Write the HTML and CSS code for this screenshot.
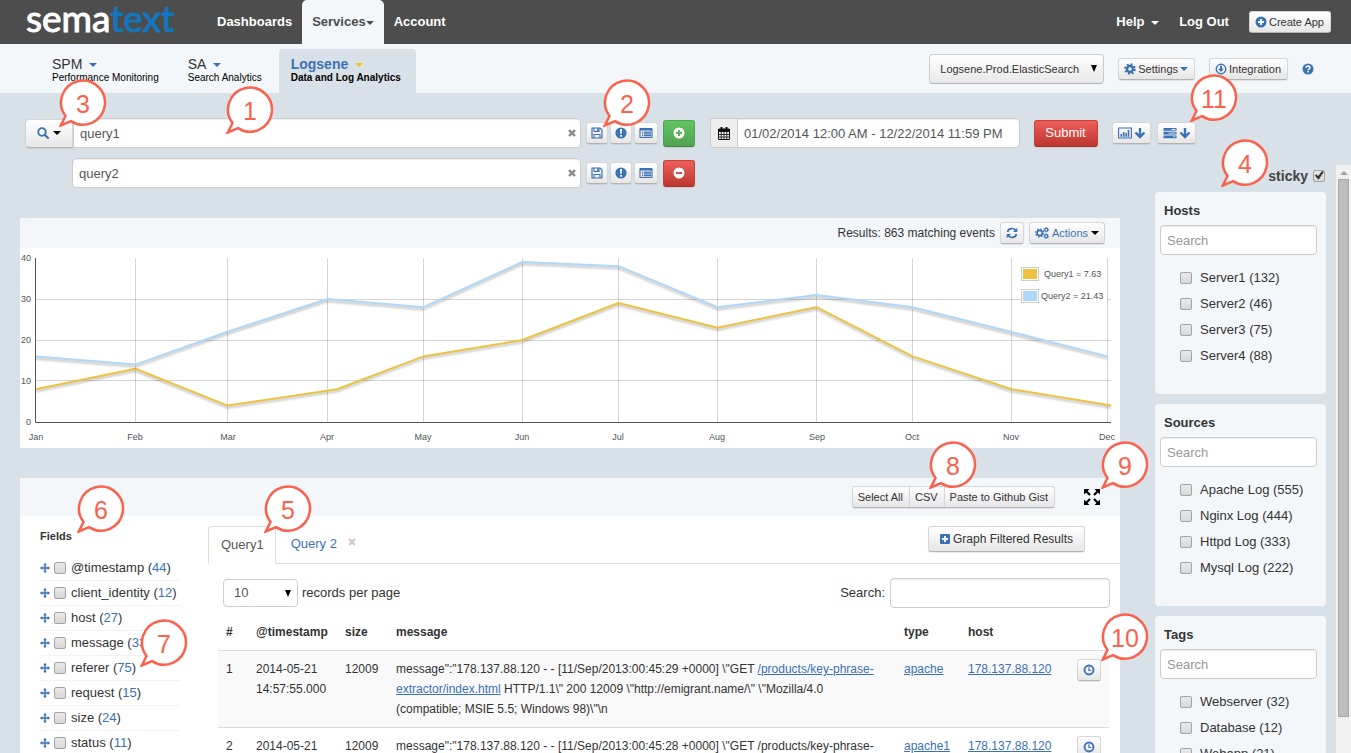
FILE: index.html
```html
<!DOCTYPE html>
<html lang="en">
<head>
<meta charset="utf-8">
<title>Logsene</title>
<link rel="stylesheet" href="styles.css">
</head>
<body>
<svg class="sprite" aria-hidden="true">
  <symbol id="i-save" viewBox="0 0 12 12"><path d="M1 1h8l2 2v8H1z" fill="none" stroke="currentColor" stroke-width="1.2"/><path d="M3 1v3.5h5V1M3 11V7.500h6V11" fill="none" stroke="currentColor" stroke-width="1.1"/><path d="M6 1.500h1.500V4H6z" fill="currentColor"/></symbol>
  <symbol id="i-alert" viewBox="0 0 12 12"><circle cx="6" cy="6" r="5.600" fill="currentColor"/><path d="M5 2h2l-.4 5H5.400zM5.100 8h1.800v1.800H5.100z" fill="#fff"/></symbol>
  <symbol id="i-list" viewBox="0 0 14 12"><rect x="1" y="1.500" width="12" height="9" rx=".5" fill="none" stroke="currentColor" stroke-width="1.200"/><path d="M1 1h12v2.500H1zM3 4.500h1.200v1.200H3zM5 4.500h7v1.200H5zM3 6.300h1.200v1.200H3zM5 6.300h7v1.200H5zM3 8.100h1.200v1.200H3zM5 8.100h7v1.200H5z" fill="currentColor"/></symbol>
  <symbol id="i-plus" viewBox="0 0 12 12"><path fill-rule="evenodd" d="M6 .5a5.500 5.500 0 1 1 0 11a5.500 5.500 0 0 1 0-11zM5 3v2H3v2h2v2h2V7h2V5H7V3z" fill="currentColor"/></symbol>
  <symbol id="i-minus" viewBox="0 0 12 12"><path fill-rule="evenodd" d="M6 .5a5.500 5.500 0 1 1 0 11a5.500 5.500 0 0 1 0-11zM3 5v2h6V5z" fill="currentColor"/></symbol>
  <symbol id="i-plus-square" viewBox="0 0 12 12"><path fill-rule="evenodd" d="M2 1h8a1 1 0 0 1 1 1v8a1 1 0 0 1-1 1H2a1 1 0 0 1-1-1V2a1 1 0 0 1 1-1zM5 3v2H3v2h2v2h2V7h2V5H7V3z" fill="currentColor"/></symbol>
  <symbol id="i-calendar" viewBox="0 0 12 13"><path d="M.5 2h11v10.500H.5z" fill="none" stroke="currentColor"/><path d="M.5 2h11v3H.5zM2.500 0h2v3h-2zM7.500 0h2v3h-2z" fill="currentColor"/><path d="M3.250 5v7.500M6 5v7.500M8.750 5v7.500M.5 7.500h11M.5 10h11" stroke="currentColor" stroke-width=".8"/></symbol>
  <symbol id="i-search" viewBox="0 0 12 12"><circle cx="5" cy="5" r="3.800" fill="none" stroke="currentColor" stroke-width="1.800"/><path d="M7.700 7.700l3.300 3.300" stroke="currentColor" stroke-width="2.200" stroke-linecap="round"/></symbol>
  <symbol id="i-chart" viewBox="0 0 14 12"><path d="M.6 1h12.800v10H.6z" fill="none" stroke="currentColor" stroke-width="1.100"/><path d="M2.500 7h1.600v2.800H2.500zM4.900 5h1.600v4.800H4.900zM7.300 6h1.600v3.800H7.300zM9.700 3h1.600v6.800H9.700z" fill="currentColor"/></symbol>
  <symbol id="i-down" viewBox="0 0 12 12"><path d="M6 1v9M1.500 5.500L6 10l4.500-4.500" fill="none" stroke="currentColor" stroke-width="2.400"/></symbol>
  <symbol id="i-tasks" viewBox="0 0 13 12"><path d="M0 1h13v2.800H0zM0 4.700h13v2.800H0zM0 8.400h13v2.800H0z" fill="currentColor"/><path d="M8 2h4v.9H8zM5 5.700h7v.9H5zM9.500 9.400H12v.9H9.500z" fill="#f2f2f2"/></symbol>
  <symbol id="i-cog" viewBox="0 0 12 12"><circle cx="6" cy="6" r="3" fill="none" stroke="currentColor" stroke-width="2.400"/><circle cx="6" cy="6" r="4.800" fill="none" stroke="currentColor" stroke-width="2" stroke-dasharray="1.900 1.870"/></symbol>
  <symbol id="i-cogs" viewBox="0 0 14 12"><circle cx="4.700" cy="6" r="2.600" fill="none" stroke="currentColor" stroke-width="1.600"/><circle cx="4.700" cy="6" r="3.900" fill="none" stroke="currentColor" stroke-width="1.500" stroke-dasharray="1.500 1.563"/><circle cx="11.200" cy="2.800" r="1.500" fill="none" stroke="currentColor" stroke-width="1.200"/><circle cx="11.200" cy="2.800" r="2.300" fill="none" stroke="currentColor" stroke-width=".9" stroke-dasharray="1 .806"/><circle cx="11.200" cy="9.200" r="1.500" fill="none" stroke="currentColor" stroke-width="1.200"/><circle cx="11.200" cy="9.200" r="2.300" fill="none" stroke="currentColor" stroke-width=".9" stroke-dasharray="1 .806"/></symbol>
  <symbol id="i-refresh" viewBox="0 0 12 12"><path d="M1.500 5A4.600 4.600 0 0 1 9.600 3.300M10.500 7A4.600 4.600 0 0 1 2.400 8.700" fill="none" stroke="currentColor" stroke-width="1.700"/><path d="M11.300.8v4.300H7zM.7 11.200V6.900H5z" fill="currentColor"/></symbol>
  <symbol id="i-clock" viewBox="0 0 12 12"><circle cx="6" cy="6" r="4.500" fill="none" stroke="currentColor" stroke-width="1.900"/><path d="M6 3.300V6.500H8.300" fill="none" stroke="currentColor" stroke-width="1.200"/></symbol>
  <symbol id="i-help" viewBox="0 0 12 12"><circle cx="6" cy="6" r="5.500" fill="currentColor"/><path d="M4 4.800C4 2.500 8 2.500 8 4.600C8 5.800 6.100 5.800 6.100 7.200" fill="none" stroke="#fff" stroke-width="1.500"/><path d="M5.300 8h1.600v1.500H5.300z" fill="#fff"/></symbol>
  <symbol id="i-download" viewBox="0 0 12 12"><circle cx="6" cy="6" r="4.700" fill="none" stroke="currentColor" stroke-width="1.500"/><path d="M5 2.800h2v3h1.900L6 9 3.100 5.800H5z" fill="currentColor"/></symbol>
  <symbol id="i-move" viewBox="0 0 12 12"><path d="M6 1v10M1 6h10" stroke="currentColor" stroke-width="1.700"/><path d="M6 0l2.300 2.800H3.700zM6 12l2.300-2.800H3.700zM0 6l2.800-2.300v4.600zM12 6L9.200 3.700v4.600z" fill="currentColor"/></symbol>
  <symbol id="i-expand" viewBox="0 0 16 16"><path d="M0 0h5.500L0 5.500zM16 0v5.500L10.500 0zM0 16v-5.500L5.500 16zM16 16h-5.500l5.500-5.500z" fill="currentColor"/><path d="M2 2l4 4M14 2l-4 4M2 14l4-4M14 14l-4-4" stroke="currentColor" stroke-width="2.200"/></symbol>
  <symbol id="i-tri" viewBox="0 0 6 7"><path d="M0 0h6L3 7z" fill="currentColor"/></symbol>
  <symbol id="i-x" viewBox="0 0 8 8"><path d="M1 1l6 6M7 1L1 7" stroke="currentColor" stroke-width="2.400"/></symbol>
  <symbol id="i-bubble" viewBox="0 0 48 48"><path d="M1.800 46.500L6.500 37A22 22 0 1 1 12 42.100z" fill="#fff" stroke="#fb614d" stroke-width="2.500"/></symbol>
</svg>

<header class="topbar">
  <a class="logo" href="#">sema<span>text</span></a>
  <nav class="mainnav">
    <a href="#">Dashboards</a>
    <a href="#" class="active">Services<i class="caret"></i></a>
    <a href="#">Account</a>
  </nav>
  <div class="usernav">
    <a href="#">Help <i class="caret"></i></a>
    <a href="#">Log Out</a>
    <button class="btn"><svg class="ico"><use href="#i-plus"/></svg>Create App</button>
  </div>
</header>

<div class="subnav">
  <nav class="apps">
    <a href="#"><span class="app">SPM <i class="caret"></i></span><span class="desc">Performance Monitoring</span></a>
    <a href="#"><span class="app">SA <i class="caret"></i></span><span class="desc">Search Analytics</span></a>
    <a href="#" class="active"><span class="app">Logsene <i class="caret"></i></span><span class="desc">Data and Log Analytics</span></a>
  </nav>
  <div class="apptools">
    <div class="picker app-picker">
      <select aria-label="Application"><option>Logsene.Prod.ElasticSearch</option></select>
      <svg><use href="#i-tri"/></svg>
    </div>
    <button class="btn"><svg class="ico"><use href="#i-cog"/></svg>Settings <i class="caret blue"></i></button>
    <button class="btn"><svg class="ico"><use href="#i-download"/></svg>Integration</button>
    <a href="#" class="help" aria-label="Help"><svg class="ico"><use href="#i-help"/></svg></a>
  </div>
</div>

<form class="query">
  <div class="queries">
    <div class="qrow">
      <button type="button" class="btn scope" aria-label="Search scope"><svg class="ico"><use href="#i-search"/></svg><i class="caret dark"></i></button>
      <div class="field joined"><input type="text" value="query1" aria-label="First query"><button type="button" class="clear" aria-label="Clear"><svg><use href="#i-x"/></svg></button></div>
      <div class="acts">
        <button type="button" class="btn" aria-label="Save"><svg class="ico"><use href="#i-save"/></svg></button>
        <button type="button" class="btn" aria-label="Alert"><svg class="ico"><use href="#i-alert"/></svg></button>
        <button type="button" class="btn" aria-label="List"><svg class="ico wide"><use href="#i-list"/></svg></button>
      </div>
      <button type="button" class="btn solid green" aria-label="Add query"><svg class="ico"><use href="#i-plus"/></svg></button>
    </div>
    <div class="qrow second">
      <div class="field"><input type="text" value="query2" aria-label="Second query"><button type="button" class="clear" aria-label="Clear"><svg><use href="#i-x"/></svg></button></div>
      <div class="acts">
        <button type="button" class="btn" aria-label="Save"><svg class="ico"><use href="#i-save"/></svg></button>
        <button type="button" class="btn" aria-label="Alert"><svg class="ico"><use href="#i-alert"/></svg></button>
        <button type="button" class="btn" aria-label="List"><svg class="ico wide"><use href="#i-list"/></svg></button>
      </div>
      <button type="button" class="btn solid red" aria-label="Remove query"><svg class="ico"><use href="#i-minus"/></svg></button>
    </div>
  </div>
  <div class="range">
    <label class="daterange"><span class="addon"><svg><use href="#i-calendar"/></svg></span><input type="text" value="01/02/2014 12:00 AM - 12/22/2014 11:59 PM" aria-label="Date range"></label>
    <button type="button" class="btn solid red submit">Submit</button>
    <button type="button" class="btn double" aria-label="Toggle chart"><svg class="ico wide"><use href="#i-chart"/></svg><svg class="ico"><use href="#i-down"/></svg></button>
    <button type="button" class="btn double" aria-label="Toggle filters"><svg class="ico wide"><use href="#i-tasks"/></svg><svg class="ico"><use href="#i-down"/></svg></button>
  </div>
</form>

<div class="workspace">
  <main class="content">
    <section class="panel">
      <div class="chart-head">
        <span>Results: 863 matching events</span>
        <button class="btn" aria-label="Refresh"><svg class="ico"><use href="#i-refresh"/></svg></button>
        <button class="btn link"><svg class="ico wide"><use href="#i-cogs"/></svg>Actions <i class="caret dark"></i></button>
      </div>
      <svg class="chart" viewBox="0 0 1100 200" role="img" aria-label="Matching events per month">
        <defs>
          <path id="s2" d="M16 108.400L115.500 116.600 207.500 83.800 307.500 51 403.500 59.200 502.500 14 598.500 18.200 697.500 59.200 796.500 47 892.500 59.200 991.500 84 1087.500 108.400"/>
          <path id="s1" d="M16 141.200L115.500 120.700 207.500 157.600 317 141.200 403.500 108.400 502.500 92 598.500 55 697.500 79.700 796.500 59.200 892.500 108.400 991.500 141.200 1091 157.600"/>
        </defs>
        <path class="grid" d="M16 51.500h1075M16 92.500h1075M16 132.500h1075M115.500 10v164M207.500 10v164M307.500 10v164M403.500 10v164M502.500 10v164M598.500 10v164M697.500 10v164M796.500 10v164M892.500 10v164M991.500 10v164M1087.500 10v164"/>
        <path class="axis" d="M15.500 10v164.500H1091"/>
        <use href="#s1" class="line yellow"/>
        <use href="#s2" class="line sky"/>
        <rect x="1018" y="43" width="69" height="10" fill="#fff"/>
        <g class="keys"><rect x="1001.500" y="19.500" width="17" height="13"/><rect x="1001.500" y="41.500" width="17" height="13"/></g>
        <rect x="1003" y="21" width="14" height="10" fill="#edc240"/><rect x="1003" y="43" width="14" height="10" fill="#afd8f8"/>
        <g class="labels">
          <text x="1024" y="29">Query1 = 7.63</text><text x="1021" y="51">Query2 = 21.43</text>
          <g text-anchor="end"><text x="11" y="13">40</text><text x="11" y="54">30</text><text x="11" y="95">20</text><text x="11" y="136">10</text><text x="11" y="177">0</text></g>
          <g text-anchor="middle"><text x="16" y="192">Jan</text><text x="115" y="192">Feb</text><text x="208" y="192">Mar</text><text x="307" y="192">Apr</text><text x="403" y="192">May</text><text x="502" y="192">Jun</text><text x="598" y="192">Jul</text><text x="697" y="192">Aug</text><text x="797" y="192">Sep</text><text x="892" y="192">Oct</text><text x="991" y="192">Nov</text><text x="1087" y="192">Dec</text></g>
        </g>
      </svg>
    </section>

    <section class="panel">
      <div class="results-head">
        <div class="group"><button class="btn">Select All</button><button class="btn">CSV</button><button class="btn">Paste to Github Gist</button></div>
        <button class="expand" aria-label="Expand"><svg><use href="#i-expand"/></svg></button>
      </div>
      <div class="results">
        <aside class="fields">
          <h2>Fields</h2>
          <ul>
            <li><svg><use href="#i-move"/></svg><label><input type="checkbox">@timestamp (<b>44</b>)</label></li>
            <li><svg><use href="#i-move"/></svg><label><input type="checkbox">client_identity (<b>12</b>)</label></li>
            <li><svg><use href="#i-move"/></svg><label><input type="checkbox">host (<b>27</b>)</label></li>
            <li><svg><use href="#i-move"/></svg><label><input type="checkbox">message (<b>33</b>)</label></li>
            <li><svg><use href="#i-move"/></svg><label><input type="checkbox">referer (<b>75</b>)</label></li>
            <li><svg><use href="#i-move"/></svg><label><input type="checkbox">request (<b>15</b>)</label></li>
            <li><svg><use href="#i-move"/></svg><label><input type="checkbox">size (<b>24</b>)</label></li>
            <li><svg><use href="#i-move"/></svg><label><input type="checkbox">status (<b>11</b>)</label></li>
          </ul>
        </aside>
        <div class="records">
          <div class="tabs">
            <a href="#" class="tab active">Query1</a>
            <a href="#" class="tab">Query 2<svg><use href="#i-x"/></svg></a>
            <button class="btn graph"><svg class="ico"><use href="#i-plus-square"/></svg>Graph Filtered Results</button>
          </div>
          <div class="tabletools">
            <div class="picker size-picker">
              <select id="pagesize"><option>10</option></select>
              <svg><use href="#i-tri"/></svg>
            </div>
            <label for="pagesize">records per page</label>
            <label class="find">Search: <input type="text"></label>
          </div>
          <table>
            <colgroup><col class="c-n"><col class="c-ts"><col class="c-size"><col><col class="c-type"><col class="c-host"><col class="c-act"></colgroup>
            <thead><tr><th>#</th><th>@timestamp</th><th>size</th><th>message</th><th>type</th><th>host</th><th></th></tr></thead>
            <tbody>
              <tr class="odd"><td>1</td><td>2014-05-21 14:57:55.000</td><td>12009</td><td>message":"178.137.88.120 - - [11/Sep/2013:00:45:29 +0000] \"GET <a href="#">/products/key-phrase-<br>extractor/index.html</a> HTTP/1.1\" 200 12009 \"http://emigrant.name/\" \"Mozilla/4.0<br>(compatible; MSIE 5.5; Windows 98)\"\n</td><td><a href="#">apache</a></td><td><a href="#">178.137.88.120</a></td><td><button class="btn" aria-label="Context"><svg class="ico"><use href="#i-clock"/></svg></button></td></tr>
              <tr><td>2</td><td>2014-05-21</td><td>12009</td><td>message":"178.137.88.120 - - [11/Sep/2013:00:45:28 +0000] \"GET /products/key-phrase-</td><td><a href="#">apache1</a></td><td><a href="#">178.137.88.120</a></td><td><button class="btn" aria-label="Context"><svg class="ico"><use href="#i-clock"/></svg></button></td></tr>
            </tbody>
          </table>
        </div>
      </div>
    </section>
  </main>

  <aside class="side">
    <div class="facets">
      <label class="sticky">sticky <input type="checkbox" checked></label>
      <section class="facet">
        <h2>Hosts</h2>
        <input type="text" placeholder="Search" aria-label="Search hosts">
        <label><input type="checkbox">Server1 (132)</label>
        <label><input type="checkbox">Server2 (46)</label>
        <label><input type="checkbox">Server3 (75)</label>
        <label><input type="checkbox">Server4 (88)</label>
      </section>
      <section class="facet">
        <h2>Sources</h2>
        <input type="text" placeholder="Search" aria-label="Search sources">
        <label><input type="checkbox">Apache Log (555)</label>
        <label><input type="checkbox">Nginx Log (444)</label>
        <label><input type="checkbox">Httpd Log (333)</label>
        <label><input type="checkbox">Mysql Log (222)</label>
      </section>
      <section class="facet">
        <h2>Tags</h2>
        <input type="text" placeholder="Search" aria-label="Search tags">
        <label><input type="checkbox">Webserver (32)</label>
        <label><input type="checkbox">Database (12)</label>
        <label><input type="checkbox">Webapp (21)</label>
      </section>
    </div>
    <div class="scroll"><svg viewBox="0 0 8 4"><path d="M0 4L4 0l4 4z" fill="#a3a3a3"/></svg><div class="thumb"></div></div>
  </aside>
</div>

<svg class="pin p1" viewBox="0 0 48 48"><use href="#i-bubble"/><text x="24" y="34">1</text></svg>
<svg class="pin p2" viewBox="0 0 48 48"><use href="#i-bubble"/><text x="24" y="34">2</text></svg>
<svg class="pin p3" viewBox="0 0 48 48"><use href="#i-bubble"/><text x="24" y="34">3</text></svg>
<svg class="pin p4" viewBox="0 0 48 48"><use href="#i-bubble"/><text x="24" y="34">4</text></svg>
<svg class="pin p5" viewBox="0 0 48 48"><use href="#i-bubble"/><text x="24" y="34">5</text></svg>
<svg class="pin p6" viewBox="0 0 48 48"><use href="#i-bubble"/><text x="24" y="34">6</text></svg>
<svg class="pin p7" viewBox="0 0 48 48"><use href="#i-bubble"/><text x="24" y="34">7</text></svg>
<svg class="pin p8" viewBox="0 0 48 48"><use href="#i-bubble"/><text x="24" y="34">8</text></svg>
<svg class="pin p9" viewBox="0 0 48 48"><use href="#i-bubble"/><text x="24" y="34">9</text></svg>
<svg class="pin p10" viewBox="0 0 48 48"><use href="#i-bubble"/><text x="24" y="34">10</text></svg>
<svg class="pin p11" viewBox="0 0 48 48"><use href="#i-bubble"/><text x="24" y="34">11</text></svg>
</body>
</html>
```
FILE: styles.css
```css
* { box-sizing: border-box; }
body {
  margin: 0;
  height: 100vh;
  overflow: hidden;
  display: flex;
  flex-direction: column;
  position: relative;
  background: #d8e0e8;
  color: #333;
  font: 13px/20px "Liberation Sans", Arial, sans-serif;
}
input, select, button { font: inherit; color: inherit; }
a { color: #3a72b4; }
h2 { margin: 0; font-size: 13px; line-height: 20px; }
.sprite { position: absolute; width: 0; height: 0; }

.caret { display: inline-block; border: 4px solid transparent; border-top-color: currentColor; border-bottom: 0; vertical-align: middle; }
.caret.blue { color: #3a72b4; }
.caret.dark { color: #000; }
.ico { width: 12px; height: 12px; color: #3a72b4; flex: none; }
.ico.wide { width: 14px; }

.btn {
  display: inline-flex;
  align-items: center;
  justify-content: center;
  gap: 2px;
  height: 22px;
  padding: 0 6px 0 5px;
  border: 1px solid #d4d6d8;
  border-bottom-color: #b3b3b3;
  border-radius: 3px;
  background: linear-gradient(#fff, #e6e6e6);
  box-shadow: 0 1px 1px rgba(0, 0, 0, .08);
  font-size: 11px;
  line-height: 16px;
  white-space: nowrap;
}
.btn.link { gap: 3px; color: #3a72b4; }

input[type="text"] {
  min-width: 0;
  height: 30px;
  padding: 0 6px;
  border: 1px solid #ccc;
  border-radius: 4px;
  background: #fff;
  box-shadow: inset 0 1px 1px rgba(0, 0, 0, .075);
  color: #555;
}
input::placeholder { color: #999; }
input[type="checkbox"] {
  appearance: none;
  flex: none;
  width: 12px;
  height: 12px;
  margin: 0;
  border: 1px solid #a3a3a3;
  border-radius: 2px;
  background: linear-gradient(#e9e9e9, #d8d8d8);
}
input[type="checkbox"]:checked::before {
  content: "";
  display: block;
  width: 10px;
  height: 10px;
  background: #333;
  clip-path: polygon(8% 50%, 26% 38%, 40% 58%, 80% 5%, 98% 15%, 45% 92%);
}

.topbar { display: flex; height: 44px; flex: none; padding: 0 20px 0 26px; background: #4d4d4d; }
.logo { width: 181px; color: #fff; font: 37px/36px Lato, sans-serif; text-decoration: none; -webkit-text-stroke: 1px currentColor; }
.logo span { color: #1277bd; }
.mainnav { display: flex; }
.mainnav a { padding: 0 10px; line-height: 44px; color: #fff; font-weight: bold; text-decoration: none; }
.mainnav a.active { border-radius: 5px 5px 0 0; background: #f3f7fa; color: #4d4d4d; }
.usernav { display: flex; align-items: center; gap: 20px; margin-left: auto; }
.usernav a { color: #fff; font-weight: bold; text-decoration: none; }
.usernav .caret { margin-left: 3px; }

.subnav { display: flex; height: 49px; flex: none; padding: 0 37px 0 40px; background: #f3f7fa; }
.apps { display: flex; gap: 2px; padding-top: 5px; }
.apps a { display: flex; flex-direction: column; padding: 7px 15px 0 12px; color: #333; text-decoration: none; }
.apps .app { font-size: 14px; line-height: 16px; }
.apps .caret { margin-left: 3px; color: #3a72b4; }
.apps .desc { font-size: 10px; line-height: 12px; color: #000; }
.apps .active { border-radius: 4px 4px 0 0; background: #d8e0e8; font-weight: bold; }
.apps .active .app { color: #3a72b4; }
.apps .active .caret { color: #f5bd25; }
.apptools { display: flex; align-items: center; gap: 14px; margin-left: auto; }
.help { display: flex; }

.picker { display: grid; align-items: center; }
.picker select, .picker svg { grid-area: 1 / 1; }
.picker select { appearance: none; width: 100%; border: 1px solid #ccc; border-radius: 4px; background: #fff; }
.picker svg { justify-self: end; width: 6px; height: 7px; margin-right: 7px; color: #000; pointer-events: none; }
.app-picker { width: 175px; }
.app-picker select { height: 30px; padding: 0 10px; border-bottom-color: #b3b3b3; background: linear-gradient(#fff, #e8e8e8); font-size: 11px; }
.size-picker { width: 75px; }
.size-picker select { height: 28px; padding: 0 10px; color: #555; }

.query { display: flex; flex: none; gap: 15px; padding: 25px 155px 30px 25px; }
.queries { display: flex; flex: 1; flex-direction: column; gap: 10px; }
.qrow { display: flex; align-items: center; height: 30px; }
.qrow.second { padding-left: 47px; }
.scope { width: 48px; height: 29px; gap: 4px; border-radius: 4px 0 0 4px; }
.field { display: grid; flex: 1; align-items: center; }
.field input { grid-area: 1 / 1; width: 100%; }
.field.joined input { border-radius: 0 4px 4px 0; }
.clear { grid-area: 1 / 1; justify-self: end; display: flex; margin-right: 5px; padding: 0; border: 0; background: none; color: #888; }
.clear svg { width: 8px; height: 8px; }
.acts { display: flex; gap: 2px; margin: 0 5px; }
.acts .btn { padding: 0 4px; }
.solid { height: 27px; border-radius: 3px; color: #fff; }
.solid .ico { color: #fff; }
.qrow .solid { width: 32px; padding: 0; }
.green { border-color: #51a351 #51a351 #3f873f; background: linear-gradient(#62c462, #51a351); }
.red { border-color: #c9403a #c9403a #a82f2a; background: linear-gradient(#ee5f5b, #bd362f); }
.range { display: flex; align-items: center; height: 30px; }
.daterange { display: flex; width: 310px; }
.addon { display: flex; flex: none; align-items: center; justify-content: center; width: 27px; border: 1px solid #ccc; border-right: 0; border-radius: 4px 0 0 4px; background: #eee; }
.addon svg { width: 12px; height: 13px; color: #111; }
.daterange input { flex: 1; border-radius: 0 4px 4px 0; }
.submit { width: 64px; margin: 0 14px; font-size: 13px; }
.double { width: 39px; padding: 0; }
.double + .double { margin-left: 6px; }

.workspace { display: flex; flex: 1; min-height: 0; padding-left: 20px; }
.content { flex: 1; min-width: 0; display: flex; flex-direction: column; gap: 30px; }
.panel { flex: none; background: #fff; }
.chart-head { display: flex; align-items: center; justify-content: flex-end; gap: 5px; height: 30px; padding-right: 15px; background: #f3f7fa; font-size: 12px; }
.chart-head .btn { padding: 0 5px; }
.chart { display: block; width: 100%; }
.grid { fill: none; stroke: rgba(84, 84, 84, .25); }
.axis { fill: none; stroke: #545454; }
.line { fill: none; stroke-width: 2; stroke-linejoin: round; filter: drop-shadow(0 2px 1px rgba(0, 0, 0, .25)); }
.yellow { stroke: #edc240; }
.sky { stroke: #afd8f8; }
.keys rect { fill: #fff; stroke: #ccc; }
.labels { fill: #545454; font-size: 9px; }

.results-head { display: flex; align-items: center; justify-content: flex-end; height: 38px; padding-right: 20px; background: #f3f7fa; }
.group { display: flex; }
.group .btn { border-radius: 0; }
.group .btn + .btn { margin-left: -1px; }
.group .btn:first-child { border-radius: 3px 0 0 3px; }
.group .btn:last-child { border-radius: 0 3px 3px 0; }
.expand { display: flex; margin-left: 29px; padding: 0; border: 0; background: none; color: #000; }
.expand svg { width: 16px; height: 16px; }

.results { display: flex; }
.fields { width: 188px; flex: none; padding: 10px 28px 0 20px; }
.fields h2 { margin-bottom: 10px; font-size: 11px; }
.fields ul { margin: 0; padding: 0; list-style: none; }
.fields li { display: flex; align-items: center; gap: 4px; height: 25px; border-bottom: 1px solid #f2f2f2; white-space: nowrap; }
.fields li svg { width: 10px; height: 10px; flex: none; color: #3a72b4; }
.fields label { display: flex; align-items: center; white-space: pre; }
.fields input { margin-right: 5px; }
.fields b { color: #3a72b4; font-weight: normal; }

.records { flex: 1; min-width: 0; padding-top: 10px; }
.tabs { display: flex; height: 38px; border-bottom: 1px solid #ddd; }
.tab { display: flex; gap: 11px; height: 38px; padding: 0 15px; line-height: 36px; text-decoration: none; }
.tab.active { padding: 0 11px 0 12px; border: 1px solid #ddd; border-bottom-color: #fff; border-radius: 4px 4px 0 0; background: #fff; color: #555; }
.tab svg { width: 8px; height: 8px; margin-top: 12px; color: #ccc; }
.graph { height: 26px; width: 157px; margin: 0 35px 0 auto; font-size: 12px; }
.tabletools { display: flex; align-items: center; gap: 4px; padding: 14px 10px 6px 15px; }
.find { display: flex; align-items: center; gap: 5px; margin-left: auto; }
.find input { width: 220px; }
table { width: calc(100% - 21px); margin-left: 10px; border-collapse: collapse; table-layout: fixed; font-size: 12px; }
.c-n { width: 30px; }
.c-ts { width: 89px; }
.c-size { width: 51px; }
.c-type { width: 64px; }
.c-host { width: 109px; }
.c-act { width: 40px; }
th, td { padding: 8px; text-align: left; vertical-align: top; }
th { white-space: nowrap; }
td { border-top: 1px solid #ddd; }
.odd td { background: #f9f9f9; }
td .btn { display: flex; width: 24px; padding: 0; margin-bottom: -2px; }

.side { display: flex; flex: none; gap: 10px; width: 231px; margin-top: -53px; padding-left: 35px; justify-content: space-between; }
.facets { display: flex; flex: 1; flex-direction: column; gap: 10px; }
.sticky { display: flex; align-items: center; justify-content: flex-end; gap: 5px; height: 17px; padding: 4px 1px 0 0; font-size: 14px; font-weight: bold; color: #444; }
.facet { flex: none; height: 202px; padding: 9px 9px 0 5px; border-radius: 4px; background: #f3f7fa; }
.facet h2 { padding-left: 4px; }
.facet input[type="text"] { width: 100%; margin: 4px 0 10px; }
.facet label { display: flex; align-items: center; gap: 8px; height: 26px; padding-left: 20px; }
.scroll { display: flex; flex-direction: column; align-items: center; gap: 4px; width: 15px; padding-top: 6px; background: #f1f1f1; }
.scroll svg { width: 8px; height: 4px; }
.thumb { width: 11px; height: calc(100% - 44px); border: 1px solid #a8a8a8; background: #bdbdbd; }

.pin { position: absolute; width: 48px; height: 48px; }
.pin text { fill: #fb614d; font-size: 25px; text-anchor: middle; }
.p1 { left: 226px; top: 86px; }
.p2 { left: 603px; top: 79px; }
.p3 { left: 59px; top: 79px; }
.p4 { left: 1221px; top: 139px; }
.p5 { left: 264px; top: 485px; }
.p6 { left: 77px; top: 485px; }
.p7 { left: 140px; top: 619px; }
.p8 { left: 929px; top: 441px; }
.p9 { left: 1101px; top: 441px; }
.p10 { left: 1101px; top: 613px; }
.p11 { left: 1190px; top: 74px; }
```
